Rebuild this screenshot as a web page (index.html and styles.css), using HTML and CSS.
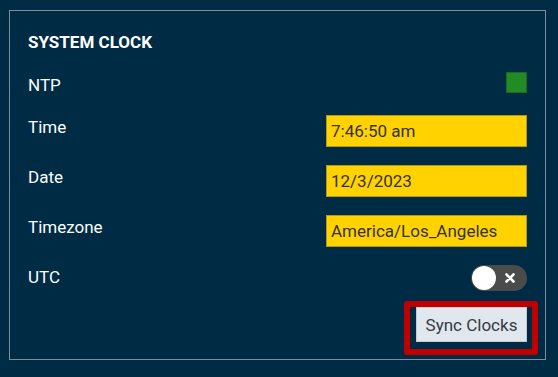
FILE: index.html
```html
<!DOCTYPE html>
<html lang="en">
<head>
  <meta charset="UTF-8">
  <title>System Clock</title>
  <link rel="stylesheet" href="styles.css">
</head>
<body>

  <div class="panel">
    <h2 class="title">SYSTEM CLOCK</h2>

    <div class="row row-ntp">
      <span class="label">NTP</span>
      <span class="status ok"></span>
    </div>

    <div class="row">
      <span class="label">Time</span>
      <input type="text" class="field" id="time" value="7:46:50 am">
    </div>

    <div class="row">
      <span class="label">Date</span>
      <input type="text" class="field" id="date" value="12/3/2023">
    </div>

    <div class="row">
      <span class="label">Timezone</span>
      <input type="text" class="field" id="timezone" value="America/Los_Angeles">
    </div>

    <div class="row row-utc">
      <span class="label">UTC</span>
      <label class="toggle">
        <input type="checkbox" id="utc">
        <span class="knob"></span>
        <svg class="cross" viewBox="0 0 10 10" width="10" height="10">
          <path d="M1.5 1.5 L8.5 8.5 M8.5 1.5 L1.5 8.5" stroke="#fff" stroke-width="2.6" stroke-linecap="round"/>
        </svg>
      </label>
    </div>

    <div class="actions">
      <div class="highlight-wrap">
        <button class="btn" onclick="syncClocks()">Sync Clocks</button>
        <span class="highlight"></span>
      </div>
    </div>
  </div>

  <script>
    function syncClocks() {
      const now = new Date();
      document.getElementById("time").value = now.toLocaleTimeString("en-US").toLowerCase();
      document.getElementById("date").value = now.toLocaleDateString("en-US");
    }
  </script>

</body>
</html>
```

FILE: styles.css
```css
body {
  margin: 0;
  background-color: #002b45;
  font-family: Roboto, "Liberation Sans", Arial, sans-serif;
  color: #ffffff;
}
.panel {
  margin: 10px 0 0 9px;
  width: 499px;
  padding: 22px 18px 17px 18px;
  border: 1px solid #7f8d9b;
}
.title {
  margin: 0 0 21px 0;
  font-size: 17px;
  line-height: 18px;
  font-weight: bold;
}
.row {
  display: flex;
  justify-content: space-between;
  align-items: flex-start;
  height: 50px;
}
.row-ntp {
  height: 43px;
}
.row-utc {
  height: 42px;
}
.label {
  padding-top: 2px;
  font-size: 17px;
  line-height: 20px;
}
.row-ntp .label {
  padding-top: 3px;
}
.status {
  width: 19px;
  height: 19px;
  border: 1px solid #1c6a1c;
}
.status.ok {
  background-color: #238b23;
}
.field {
  box-sizing: border-box;
  width: 201px;
  height: 32px;
  margin: 0;
  padding: 0 4px;
  background-color: #ffd200;
  border: 1px solid #b59a10;
  border-radius: 0;
  font-family: Roboto, "Liberation Sans", Arial, sans-serif;
  font-size: 17px;
  color: #333333;
  outline: none;
}
.toggle {
  position: relative;
  display: block;
  width: 56px;
  height: 26px;
  border-radius: 13px;
  background-color: #4b4b4b;
  cursor: pointer;
}
.toggle input {
  display: none;
}
.knob {
  position: absolute;
  top: 1px;
  left: 1px;
  width: 24px;
  height: 24px;
  border-radius: 50%;
  background-color: #ffffff;
}
.cross {
  position: absolute;
  top: 8px;
  left: 34px;
}
.actions {
  display: flex;
  justify-content: flex-end;
}
.highlight-wrap {
  position: relative;
}
.btn {
  display: block;
  width: 111px;
  height: 35px;
  padding: 0;
  background-color: #e0e7ed;
  border: 1px solid #c3ccd4;
  font-family: Roboto, "Liberation Sans", Arial, sans-serif;
  font-size: 17px;
  color: #333a44;
  cursor: pointer;
}
.highlight {
  position: absolute;
  top: -6px;
  left: -12px;
  right: -11px;
  bottom: -13px;
  border: 6px solid #c00000;
  border-radius: 3px;
  pointer-events: none;
}
```
